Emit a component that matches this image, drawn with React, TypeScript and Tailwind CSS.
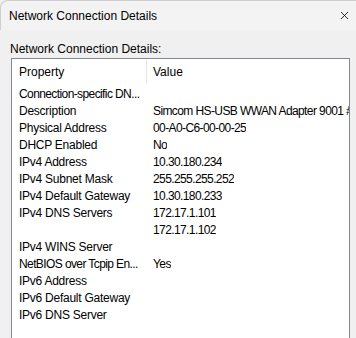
import { X } from 'lucide-react';

const rows: [string, string][] = [
  ['Connection-specific DN...', ''],
  ['Description', 'Simcom HS-USB WWAN Adapter 9001 #2'],
  ['Physical Address', '00-A0-C6-00-00-25'],
  ['DHCP Enabled', 'No'],
  ['IPv4 Address', '10.30.180.234'],
  ['IPv4 Subnet Mask', '255.255.255.252'],
  ['IPv4 Default Gateway', '10.30.180.233'],
  ['IPv4 DNS Servers', '172.17.1.101'],
  ['', '172.17.1.102'],
  ['IPv4 WINS Server', ''],
  ['NetBIOS over Tcpip En...', 'Yes'],
  ['IPv6 Address', ''],
  ['IPv6 Default Gateway', ''],
  ['IPv6 DNS Server', ''],
];

export default function App() {
  return (
    <div className="w-[356px] h-[338px] overflow-hidden bg-[#f0f0f0] text-[12px] text-black font-['Segoe_UI','Liberation_Sans',sans-serif]">
      {/* title bar */}
      <div className="h-[30px] flex items-center justify-between pl-[8px] pr-[5px] bg-[#f3f3f3] border-t border-l border-[#cfcfcf] rounded-tl-[8px]">
        <span>Network Connection Details</span>
        <X className="w-[13px] h-[13px] text-black" strokeWidth={1.5} />
      </div>

      <div className="pt-[12px] pl-[10px] leading-[14px]">Network Connection Details:</div>

      <div className="ml-[11px] mt-[2px] w-[339px] h-[300px] overflow-hidden bg-white border border-[#828790]">
        <div className="h-[25px] flex items-center">
          <div className="w-[134px] shrink-0 pl-[7px]">Property</div>
          <div className="w-px h-[23px] shrink-0 bg-[#e5e5e5]" />
          <div className="pl-[6px]">Value</div>
        </div>
        <div className="pt-[1px]">
          {rows.map(([k, v], i) => (
            <div key={i} className="h-[17px] flex items-center whitespace-nowrap">
              <div className={k.endsWith('...') ? 'w-[135px] shrink-0 pl-[7px] tracking-[-0.6px]' : 'w-[135px] shrink-0 pl-[7px] tracking-[-0.25px]'}>{k}</div>
              <div className="pl-[6px] overflow-hidden tracking-[-0.6px]">{v}</div>
            </div>
          ))}
        </div>
      </div>
    </div>
  );
}
